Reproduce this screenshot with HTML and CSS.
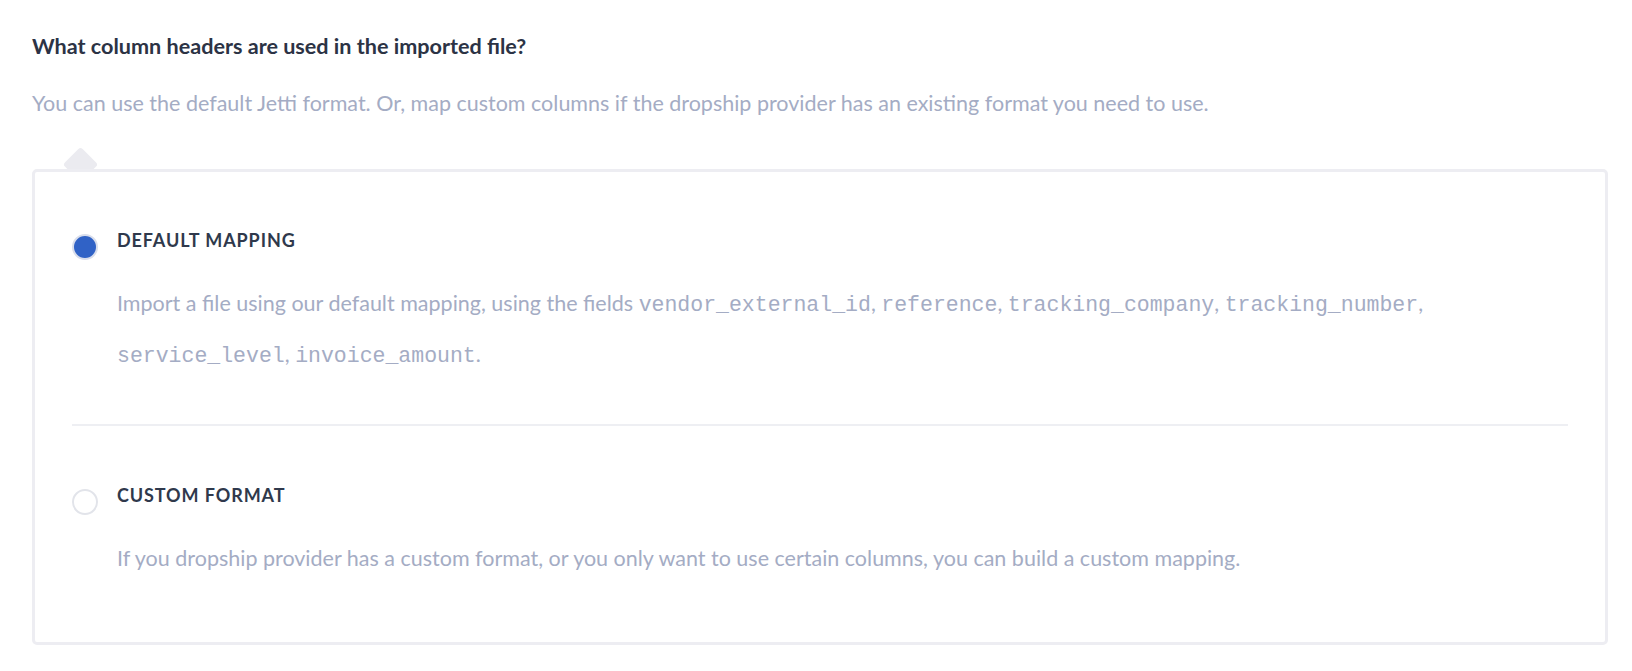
FILE: index.html
```html
<!DOCTYPE html>
<html lang="en">
<head>
    <meta charset="UTF-8">
    <meta name="viewport" content="width=device-width, initial-scale=1.0">
    <title>Column Mapping</title>
    <link rel="stylesheet" href="styles.css">
</head>
<body>
    <div class="mapping-container">
        <h2>What column headers are used in the imported file?</h2>
        <p class="subtitle">You can use the default Jetti format. Or, map custom columns if the dropship provider has an existing format you need to use.</p>

        <div class="mapping-card">
            <!-- Default mapping option -->
            <label class="option">
                <span class="radio checked"></span>
                <span class="option-body">
                    <span class="option-title">DEFAULT MAPPING</span>
                    <span class="option-text">Import a file using our default mapping, using the fields <code>vendor_external_id</code>, <code>reference</code>, <code>tracking_company</code>, <code>tracking_number</code>, <code>service_level</code>, <code>invoice_amount</code>.</span>
                </span>
            </label>

            <div class="divider"></div>

            <!-- Custom format option -->
            <label class="option">
                <span class="radio"></span>
                <span class="option-body">
                    <span class="option-title">CUSTOM FORMAT</span>
                    <span class="option-text">If you dropship provider has a custom format, or you only want to use certain columns, you can build a custom mapping.</span>
                </span>
            </label>
        </div>
    </div>
</body>
</html>
```

FILE: styles.css
```css
body {
    margin: 0;
    font-family: Lato, "Open Sans", Arial, sans-serif;
    background-color: #fff;
}
.mapping-container {
    padding: 34px 24px 0 32px;
}
.mapping-container h2 {
    margin: 0;
    font-size: 21.6px;
    line-height: 24px;
    font-weight: 700;
    color: #2c3345;
}
.subtitle {
    margin: 33px 0 0;
    font-size: 21.5px;
    line-height: 24px;
    color: #a4acc4;
}
.mapping-card {
    position: relative;
    margin-top: 54px;
    padding: 56px 37px 59px 37px;
    background-color: #fff;
    border: 3px solid #ededf2;
    border-radius: 5px;
}
.mapping-card::before {
    content: "";
    position: absolute;
    left: 33px;
    top: -20px;
    width: 25px;
    height: 25px;
    background-color: #ebebf0;
    border-radius: 3px;
    transform: rotate(45deg);
    z-index: -1;
}
.option {
    display: flex;
    align-items: flex-start;
    gap: 19px;
    cursor: pointer;
}
.radio {
    flex: none;
    box-sizing: border-box;
    width: 26px;
    height: 26px;
    margin-top: 6px;
    border: 2px solid #e2e4ea;
    border-radius: 50%;
    background-color: #fff;
}
.radio.checked {
    background-color: #3062c6;
    border-color: #d9deec;
}
.option-body {
    display: flex;
    flex-direction: column;
}
.option-title {
    font-size: 18px;
    line-height: 24px;
    font-weight: 700;
    letter-spacing: 0.9px;
    color: #2f394c;
}
.option-text {
    margin-top: 27px;
    font-size: 21.5px;
    line-height: 49px;
    color: #a4acc4;
}
.option-text code {
    font-family: "Liberation Mono", "Courier New", monospace;
    font-size: 21.5px;
}
.divider {
    height: 2px;
    margin: 43px 0 57px;
    background-color: #eeeff3;
}
```
